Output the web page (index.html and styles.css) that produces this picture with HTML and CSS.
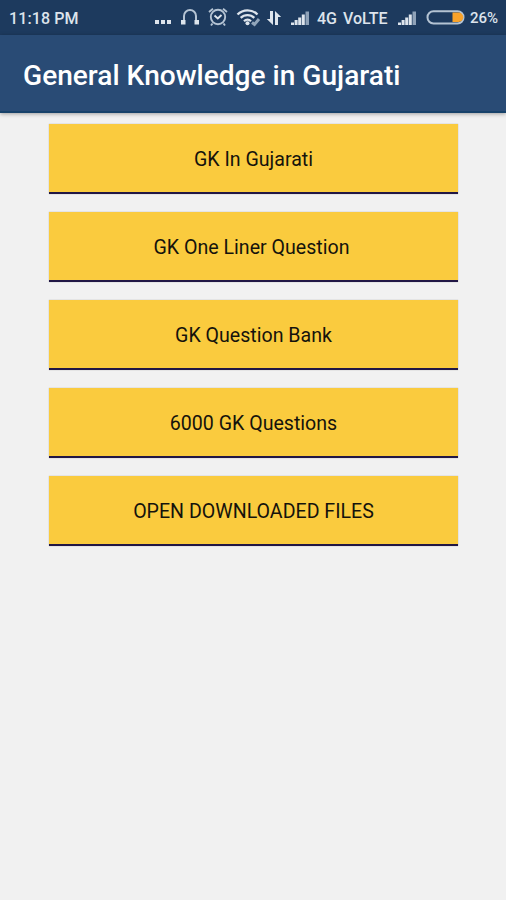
FILE: index.html
```html
<!DOCTYPE html>
<html lang="en">
<head>
    <meta charset="UTF-8">
    <meta name="viewport" content="width=device-width, initial-scale=1.0">
    <title>General Knowledge in Gujarati</title>
    <link rel="stylesheet" href="styles.css">
</head>
<body>
    <div class="status-bar">
        <span class="time">11:18 PM</span>
        <div class="status-icons">
            <svg class="dots" width="18" height="20" viewBox="0 0 18 20">
                <path d="M1 12h4v4H1zM7 12h4v4H7zM13 12h4v4h-4z" fill="#dde4ec"/>
            </svg>
            <svg class="headphones" width="20" height="20" viewBox="0 0 20 20">
                <path d="M4 14V8a6 6 0 0 1 12 0v6" fill="none" stroke="#b4c3d3" stroke-width="2"/>
                <path d="M1 12h4.500v4.500H1zM14.500 12H19v4.500h-4.500z" fill="#dde4ec"/>
            </svg>
            <svg class="alarm" width="20" height="20" viewBox="0 0 20 20">
                <circle cx="10" cy="9" r="7.200" fill="none" stroke="#b4c3d3" stroke-width="1.900"/>
                <path d="M1 4 5 .8M19 4 15 .8M4.500 15.500l-1.500 2M15.500 15.500l1.500 2" stroke="#b4c3d3" stroke-width="1.900"/>
                <path d="M6.500 7.500l3.300 3L13.500 7" fill="none" stroke="#dde4ec" stroke-width="1.900"/>
            </svg>
            <svg class="wifi" width="25" height="20" viewBox="0 0 25 20">
                <path d="M1.500 6.500a14 14 0 0 1 20 0M4.700 9.900a9.600 9.600 0 0 1 13.600 0M8 13.200a5 5 0 0 1 7 0" fill="none" stroke="#dde4ec" stroke-width="2.300"/>
                <circle cx="11.500" cy="15.300" r="2" fill="#dde4ec"/>
                <path d="M16 14.500l2.500 2L23 11" fill="none" stroke="#91a5ba" stroke-width="3"/>
            </svg>
            <svg class="arrows" width="16" height="20" viewBox="0 0 16 20">
                <path d="M4 3h3v14L.8 11H4zM12 17H9V3l6.200 6H12z" fill="#dde4ec"/>
            </svg>
            <svg class="signal" width="20" height="20" viewBox="0 0 20 20">
                <path d="M1 14.500h3V17H1zM4.600 12h3v5h-3zM8.200 9.500h3V17h-3zM11.800 6.500h3V17h-3z" fill="#dde4ec"/>
                <path d="M15.500 3.500H19V17h-3.500z" fill="#8fa2b8"/>
            </svg>
            <span class="network">4G VoLTE</span>
            <svg class="signal" width="20" height="20" viewBox="0 0 20 20">
                <path d="M1 14.500h3V17H1zM4.600 12h3v5h-3zM8.200 9.500h3V17h-3zM11.800 6.500h3V17h-3z" fill="#dde4ec"/>
                <path d="M15.500 3.500H19V17h-3.500z" fill="#8fa2b8"/>
            </svg>
            <svg class="battery" width="40" height="20" viewBox="0 0 40 20">
                <rect x="1.500" y="3.200" width="36" height="12.300" rx="6" fill="none" stroke="#b4c3d3" stroke-width="2"/>
                <path d="M26.500 4.500h6a4.700 4.700 0 0 1 0 9.500h-6z" fill="#f9a32a"/>
            </svg>
            <span class="percent">26%</span>
        </div>
    </div>

    <header>
        <h1>General Knowledge in Gujarati</h1>
    </header>

    <main class="menu">
        <button class="menu-button">GK In Gujarati</button>
        <button class="menu-button one-liner">GK One Liner Question</button>
        <button class="menu-button">GK Question Bank</button>
        <button class="menu-button">6000 GK Questions</button>
        <button class="menu-button">OPEN DOWNLOADED FILES</button>
    </main>
</body>
</html>
```
FILE: styles.css
```css
* {
    margin: 0;
    padding: 0;
    box-sizing: border-box;
}

body {
    font-family: Roboto, sans-serif;
    min-height: 100vh;
    background-color: #f1f1f1;
    color: #15130c;
}

.status-bar {
    display: flex;
    justify-content: space-between;
    align-items: center;
    height: 35px;
    padding: 1px 8px 0 9px;
    background-color: #1d3a5e;
    color: #dde4ec;
    font-size: 16px;
    font-weight: 500;
    white-space: nowrap;
}

.time {
    width: 70px;
    letter-spacing: 0.1px;
}

.status-icons {
    display: flex;
    align-items: center;
}

.status-icons svg {
    flex: none;
}

.headphones {
    margin-left: 8px;
}

.alarm {
    margin-left: 8px;
}

.wifi {
    margin-left: 8px;
}

.arrows {
    margin-left: 5px;
}

.signal {
    margin-left: 8px;
}

.network {
    width: 72px;
    margin-left: 7px;
    word-spacing: 2px;
}

.battery {
    margin-left: 9px;
}

.percent {
    width: 28px;
    margin-left: 4px;
    font-size: 15px;
}

header {
    display: flex;
    align-items: center;
    height: 78px;
    padding: 4px 23px 0;
    background-color: #294b75;
    border-bottom: 2px solid #17426a;
    box-shadow: 0 1px 4px rgba(0, 0, 0, 0.35);
    color: #fff;
}

h1 {
    font-size: 28.1px;
    font-weight: 500;
    white-space: nowrap;
}

.menu {
    display: flex;
    flex-direction: column;
    gap: 18px;
    padding: 11px 48px 0 49px;
}

.menu-button {
    height: 70px;
    padding-top: 2px;
    border: none;
    border-bottom: 2px solid #211745;
    background-color: #facb3e;
    box-shadow: 0 0 1px rgba(0, 0, 0, 0.3);
    color: inherit;
    font-family: inherit;
    font-size: 19.6px;
}

.one-liner {
    padding-right: 4px;
}
```
